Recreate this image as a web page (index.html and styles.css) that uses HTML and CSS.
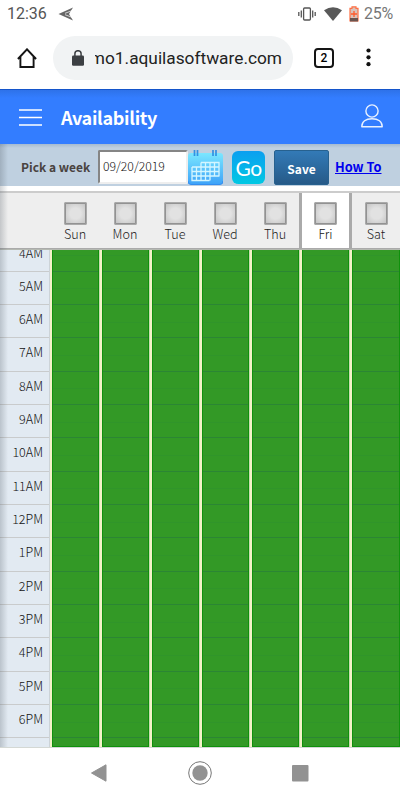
FILE: index.html
```html
<!DOCTYPE html>
<html lang="en">
<head>
    <meta charset="UTF-8">
    <meta name="viewport" content="width=device-width, initial-scale=1.0">
    <title>Availability</title>
    <link rel="stylesheet" href="styles.css">
</head>
<body>

    <div class="status">
        <span class="clock">12:36</span>
        <svg class="send" width="17" height="14" viewBox="0 0 17 14"><path d="M.5 7 15 .5 11 7 15 13.500Z" fill="#666"/><path d="M7 6.300 15 3.300M7 7.700 15 10.700" stroke="#fff" stroke-width=".7"/></svg>
        <span class="space"></span>
        <svg class="vibrate" width="18" height="14" viewBox="0 0 18 14" fill="none" stroke="#555" stroke-width="1.300"><rect x="5.600" y="1" width="6.800" height="12" rx="1"/><path d="M3.300 3.500v7M14.700 3.500v7M.8 5v4M17.200 5v4"/></svg>
        <svg class="wifi" width="18" height="14" viewBox="0 0 18 14"><path d="M0 3.200Q9-2.500 18 3.200L9 14Z" fill="#595959"/></svg>
        <svg class="battery" width="10" height="16" viewBox="0 0 10 16"><path d="M3 .8h4v1.500h2v12.700H1V2.300h2z" fill="#d8c3bc" stroke="#ff6f43" stroke-width="1.200"/><path d="M1 12h8v3.500H1z" fill="#6a5550"/><path d="M5 5v6M2 8h6" stroke="#ff5a2a" stroke-width="1.300"/></svg>
        <span class="percent">25%</span>
    </div>

    <div class="browser">
        <svg class="home" width="20" height="20" viewBox="0 0 20 20" fill="none" stroke="#151515" stroke-width="1.900"><path d="M.9 11 10 1.300 19.100 11M3.400 9v10h13.200V9"/></svg>
        <div class="address">
            <svg class="lock" width="12" height="16" viewBox="0 0 12 16"><rect y="5.500" width="12" height="10.200" rx="1.300" fill="#3c3f43"/><path d="M2.900 6V3.800a3.100 3.100 0 0 1 6.200 0V6" fill="none" stroke="#3c3f43" stroke-width="1.500"/></svg>
            <div class="url"><span>demo1.aquilasoftware.com</span></div>
        </div>
        <div class="tabs">2</div>
        <svg class="dots" width="5" height="19" viewBox="0 0 5 19" fill="#111"><circle cx="2.500" cy="2.500" r="2.100"/><circle cx="2.500" cy="9.300" r="2.100"/><circle cx="2.500" cy="16.200" r="2.100"/></svg>
    </div>

    <header>
        <svg width="23" height="17" viewBox="0 0 23 17" stroke="#fff" stroke-width="1.300"><path d="M0 1h23M0 8.500h23M0 16h23"/></svg>
        <h1>Availability</h1>
        <svg class="user" width="22" height="24" viewBox="0 0 22 24" fill="none" stroke="#e8f1ff" stroke-width="1.400"><circle cx="11" cy="7" r="6.100"/><path d="M.8 22.800C.6 17.200 5 14.800 11 14.800s10.400 2.400 10.200 8Z" stroke-linejoin="round"/></svg>
    </header>

    <main>
        <div class="toolbar">
            <label for="week">Pick a week</label>
            <input type="text" id="week" value="09/20/2019">
            <svg class="calendar-icon" width="35" height="35" viewBox="0 0 35 35">
                <defs>
                    <linearGradient id="sky" x2="0" y2="1"><stop stop-color="#7be7ff"/><stop offset="1" stop-color="#3da2f8"/></linearGradient>
                </defs>
                <rect y="3" width="35" height="31.500" rx="3" fill="url(#sky)"/>
                <path d="M0 31q0 3.500 3 3.500h29q3 0 3-3.500" fill="none" stroke="#338ef0"/>
                <path d="M6.500 0v6M9.500 0v6M25 0v6M28 0v6" stroke="#3490e2" stroke-width="1.700"/>
                <path d="M13 12.500h18v14M4 17v13.500h17.500M4 17h27M4 21.500h27M4 26h27M8.500 17v13.500M13 12.500v18M17.500 12.500v18M22 12.500v18M26.500 12.500V26" fill="none" stroke="#d4f6ff" stroke-width="1.300"/>
            </svg>
            <button class="go">Go</button>
            <button class="save">Save</button>
            <a href="#">How To</a>
        </div>

        <div class="days">
            <div class="corner"></div>
            <div class="day"><i></i>Sun</div>
            <div class="day"><i></i>Mon</div>
            <div class="day"><i></i>Tue</div>
            <div class="day"><i></i>Wed</div>
            <div class="day"><i></i>Thu</div>
            <div class="day today"><i></i>Fri</div>
            <div class="day last"><i></i>Sat</div>
        </div>

        <div class="schedule">
            <div class="hours">
                <div>4AM</div>
                <div>5AM</div>
                <div>6AM</div>
                <div>7AM</div>
                <div>8AM</div>
                <div>9AM</div>
                <div>10AM</div>
                <div>11AM</div>
                <div>12PM</div>
                <div>1PM</div>
                <div>2PM</div>
                <div>3PM</div>
                <div>4PM</div>
                <div>5PM</div>
                <div>6PM</div>
                <div></div>
            </div>
            <div class="slots"></div>
            <div class="slots"></div>
            <div class="slots"></div>
            <div class="slots"></div>
            <div class="slots"></div>
            <div class="slots"></div>
            <div class="slots"></div>
        </div>
    </main>

    <nav>
        <svg width="16" height="18" viewBox="0 0 16 18"><path d="M.5 9 15 .8v16.400z" fill="#929292" stroke="#929292" stroke-linejoin="round"/></svg>
        <svg width="24" height="24" viewBox="0 0 24 24"><circle cx="12" cy="12" r="11.300" fill="none" stroke="#777" stroke-width="1"/><circle cx="12" cy="12" r="7.700" fill="#929292"/></svg>
        <svg width="17" height="17" viewBox="0 0 17 17"><rect width="16.500" height="16.500" rx="1" fill="#929292"/></svg>
    </nav>

</body>
</html>
```

FILE: styles.css
```css
* {
    box-sizing: border-box;
}
body {
    margin: 0;
    width: 400px;
    height: 800px;
    overflow: hidden;
    background: #fff;
    font-family: "Noto Sans CJK JP", "Open Sans", sans-serif;
}
svg {
    display: block;
    flex: none;
}
/* Phone status bar */
.status {
    display: flex;
    align-items: center;
    height: 28px;
    padding: 0 7px;
    font: 16px/28px Roboto, sans-serif;
    color: #555;
}
.clock {
    width: 51px;
}
.space {
    flex: 1;
}
.wifi {
    margin-left: 8px;
}
.battery {
    margin: 0 5px 0 7px;
}
.percent {
    color: #777;
    width: 29px;
    letter-spacing: -0.2px;
}
/* Browser bar */
.browser {
    display: flex;
    align-items: center;
    height: 61px;
    padding: 0 29px 2px 17px;
}
.address {
    display: flex;
    align-items: center;
    width: 240px;
    height: 44px;
    margin-left: 16px;
    padding-left: 19px;
    border-radius: 22px;
    background: #f1f3f4;
}
.url {
    display: flex;
    justify-content: flex-end;
    width: 187px;
    margin-left: 11px;
    overflow: hidden;
    white-space: nowrap;
    font: 17.3px/24px Roboto, sans-serif;
    color: #222;
}
.tabs {
    width: 20px;
    height: 20px;
    margin: 0 32px 0 21px;
    flex: none;
    border: 2px solid #151515;
    border-radius: 4px;
    font: 500 12px/16px Roboto, sans-serif;
    text-align: center;
}
.address {
    flex: none;
}
.dots {
    margin-left: auto;
}
/* Page header */
header {
    display: flex;
    align-items: center;
    height: 55px;
    padding: 0 17px 0 19px;
    border-top: 1px solid #1455cb;
    background: linear-gradient(#2e72e9, #337dff 8px);
    color: white;
}
h1 {
    flex: 1;
    margin: 0 0 1px 19px;
    font-size: 18px;
    line-height: 30px;
    font-weight: bold;
    letter-spacing: -0.3px;
}
.user {
    margin-bottom: 3px;
}
main {
    height: 604px;
    position: relative;
}
/* Soft shadow down the left side */
main::after {
    content: "";
    position: absolute;
    top: 0;
    left: 0;
    width: 8px;
    height: 603px;
    background: linear-gradient(to right, rgba(70, 80, 90, 0.25), transparent);
}
.toolbar {
    display: flex;
    align-items: flex-start;
    height: 42px;
    padding: 6px 0 0 21px;
    background: linear-gradient(#a6bbd0, #bfd0e0 4px);
}
.toolbar label {
    width: 77px;
    font-size: 12px;
    line-height: 34px;
    font-weight: bold;
    color: #494340;
    white-space: nowrap;
}
.toolbar input {
    width: 90px;
    height: 34px;
    padding: 0 3px 2px;
    border: 2px solid;
    border-color: #858585 #eee #eee #858585;
    border-radius: 2px;
    background: #fff;
    font: 300 12.2px "Noto Sans CJK JP", sans-serif;
    color: #111;
}
.calendar-icon {
    margin: 0 9px 0 0;
}
.toolbar button {
    padding: 0;
    border: none;
    color: white;
}
.toolbar .go {
    width: 33px;
    height: 33px;
    margin-top: 1px;
    border-radius: 6px;
    background: linear-gradient(#0b9ff0, #00c8e3);
    font: 21px/31px Lato, sans-serif;
    letter-spacing: -0.5px;
}
.toolbar .save {
    width: 55px;
    height: 35px;
    margin: 0 6px 0 9px;
    padding-top: 2px;
    border: 1px solid #27618f;
    border-radius: 2px;
    background: linear-gradient(#337ab7, #265a88);
    font: bold 12px/32px "Noto Sans CJK JP", sans-serif;
}
.toolbar a {
    font-size: 12.8px;
    line-height: 33px;
    font-weight: bold;
    color: #0000ee;
}
/* Day names */
.days {
    display: flex;
    height: 58px;
    margin-top: 5px;
    border-top: 2px solid #ccc;
    border-bottom: 1px solid #aaa;
    background: #eee;
}
.corner {
    width: 50px;
}
.day {
    width: 50px;
    padding-top: 9px;
    font-size: 12.6px;
    line-height: 18px;
    text-align: center;
    font-weight: 300;
    color: #222;
}
.day i {
    display: block;
    width: 23px;
    height: 23px;
    margin: 0 auto;
    border: 2px solid #929292;
    outline: 1px solid #aaa;
    outline-offset: -1px;
    border-radius: 2px;
    background: radial-gradient(#e2e2e2 40%, #c4c4c4);
}
.day.today {
    width: 53px;
    margin: 0 -2px 0 -1px;
    border-left: 3px solid #aaa;
    border-right: 3px solid #aaa;
    background: #fff;
    color: #111;
}
.day.last {
    padding-left: 2px;
}
/* Hours and availability */
.schedule {
    display: flex;
    height: 499px;
    overflow: hidden;
    border-top: 1px solid #b5b9b2;
    border-bottom: 1px solid #d4d8d4;
}
.hours {
    width: 50px;
    margin-top: -11.5px;
    border-right: 1px solid #ccd3d8;
    background: #e2eaf2;
}
.hours div {
    height: 33.33px;
    padding-right: 6px;
    border-bottom: 1px solid #c9cbcc;
    font-size: 12.5px;
    line-height: 28.5px;
    text-align: right;
    font-weight: 300;
    color: #111;
}
.slots {
    width: 50px;
    border-left: 2px solid #f4f2c8;
    border-right: 1px solid #c8dcae;
    background:
        repeating-linear-gradient(transparent 0 32.33px, #2b8634 32.33px 33.33px) 0 -11.5px / 100% 600px,
        repeating-linear-gradient(transparent 0 16.6px, #30952a 16.6px 17.6px, transparent 17.6px 33.33px) 0 -11.5px / 100% 600px,
        #339926;
    box-shadow: inset 1px 0 #0f910c, inset -1px -1px #0f910c;
}
.slots:last-child {
    border-right: none;
}
/* Phone navigation */
nav {
    display: flex;
    align-items: center;
    justify-content: space-between;
    height: 52px;
    padding: 0 91px 2px;
}
```
